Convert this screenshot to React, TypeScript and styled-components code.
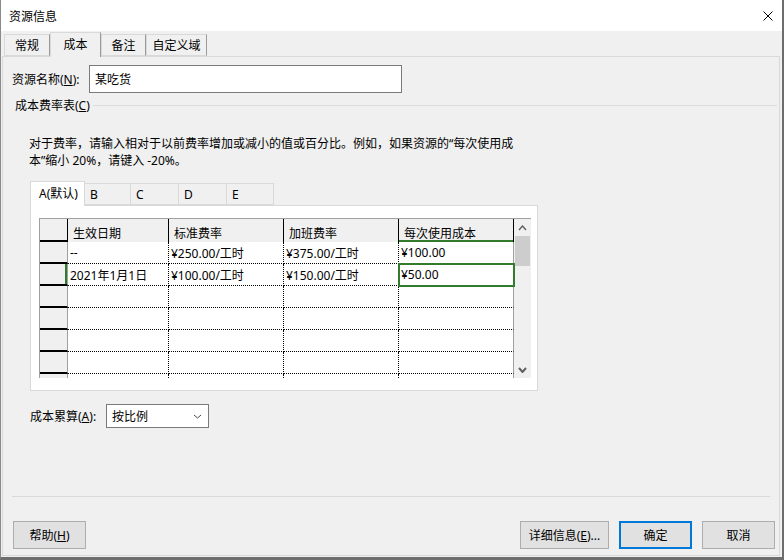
import React from 'react';
import styled, { createGlobalStyle } from 'styled-components';

const GREEN = '#327a2c';

const GlobalStyle = createGlobalStyle`
  html, body {
    margin: 0;
    padding: 0;
    background: #ffffff;
  }
  body {
    font-family: "Noto Sans", "Noto Sans CJK SC", sans-serif;
    font-size: 12px;
    color: #000;
  }
  * {
    box-sizing: border-box;
  }
`;

const Window = styled.div`
  width: 784px;
  height: 560px;
  display: flex;
  flex-direction: column;
  background: #f0f0f0;
  border-left: 1px solid #8a8a8a;
  border-right: 2px solid #6d6d6d;
  border-bottom: 3px solid #6d6d6d;
`;

const TitleBar = styled.div`
  height: 31px;
  flex: none;
  display: flex;
  align-items: center;
  justify-content: space-between;
  padding: 0 9px 0 8px;
  background: #ffffff;
`;

const TabStrip = styled.div`
  height: 25px;
  flex: none;
  display: flex;
  align-items: flex-end;
  padding-left: 3px;
`;

const Tab = styled.div<{ $w: number; $active?: boolean }>`
  width: ${p => p.$w}px;
  height: ${p => (p.$active ? 25 : 22)}px;
  margin-bottom: ${p => (p.$active ? -1 : 0)}px;
  position: relative;
  z-index: ${p => (p.$active ? 2 : 1)};
  display: flex;
  align-items: center;
  justify-content: center;
  padding-bottom: ${p => (p.$active ? 3 : 0)}px;
  background: #f0f0f0;
  border: 1px solid #d9d9d9;
  border-right-color: #9a9a9a;
  border-bottom: ${p => (p.$active ? 'none' : '1px solid #d9d9d9')};
`;

const Panel = styled.div`
  flex: 1;
  margin: 0 2px 1px 1px;
  display: flex;
  flex-direction: column;
  border: 1px solid #d9d9d9;
`;

const NameRow = styled.div`
  margin-top: 8px;
  height: 28px;
  display: flex;
  align-items: center;
  padding-left: 9px;
`;

const Label = styled.span<{ $w: number }>`
  width: ${p => p.$w}px;
  flex: none;
  white-space: nowrap;
`;

const NameInput = styled.input`
  width: 313px;
  height: 28px;
  padding: 0 5px;
  border: 1px solid #7a7a7a;
  background: #ffffff;
  font: inherit;
  color: #000;
  outline: none;
`;

const GroupHeader = styled.div`
  margin-top: 4px;
  height: 16px;
  display: flex;
  align-items: center;
  padding-left: 12px;
`;

const GroupLine = styled.div`
  flex: 1;
  height: 1px;
  margin: 0 2px 0 3px;
  background: #dcdcdc;
`;

const Hint = styled.p`
  margin: 22px 0 0;
  padding-left: 26px;
  line-height: 17px;
`;

const RateTabs = styled.div`
  margin: 12px 0 0 27px;
  height: 24px;
  display: flex;
  align-items: flex-end;
`;

const RateTab = styled.div<{ $w: number; $active?: boolean }>`
  width: ${p => p.$w}px;
  height: ${p => (p.$active ? 25 : 22)}px;
  margin-bottom: ${p => (p.$active ? -1 : 0)}px;
  position: relative;
  z-index: ${p => (p.$active ? 2 : 1)};
  display: flex;
  align-items: center;
  padding: 0 0 ${p => (p.$active ? 2 : 0)}px ${p => (p.$active ? 8 : 5)}px;
  background: ${p => (p.$active ? '#ffffff' : '#f0f0f0')};
  border: 1px solid #d9d9d9;
  border-left-width: ${p => (p.$active ? 1 : 0)}px;
  border-bottom: ${p => (p.$active ? 'none' : '1px solid #d9d9d9')};
`;

const RatePanel = styled.div`
  margin-left: 27px;
  width: 508px;
  height: 186px;
  padding: 12px 0 0 8px;
  background: #ffffff;
  border: 1px solid #d9d9d9;
`;

const GridFrame = styled.div`
  width: 492px;
  height: 160px;
  display: flex;
  overflow: hidden;
  border-top: 1px solid #a0a0a0;
  border-left: 1px solid #a0a0a0;
  background: #ffffff;
`;

const Sheet = styled.div`
  width: 474px;
  flex: none;
  display: flex;
  flex-direction: column;
`;

const Row = styled.div<{ $h: number }>`
  height: ${p => p.$h}px;
  flex: none;
  display: flex;
`;

const RowHead = styled.div<{ $current?: boolean; $corner?: boolean }>`
  width: 28px;
  height: 100%;
  flex: none;
  background: #f0f0f0;
  border-right: 1px solid ${p => (p.$corner ? '#000' : '#a0a0a0')};
  border-bottom: 2px solid #000;
  box-shadow: ${p => (p.$current ? `inset -2px 0 0 ${GREEN}` : 'none')};
`;

const ColHead = styled.div<{ $w: number; $active?: boolean }>`
  width: ${p => p.$w}px;
  height: 100%;
  flex: none;
  display: flex;
  align-items: center;
  padding: 4px 0 0 5px;
  background: #f0f0f0;
  border-right: 1px solid #000;
  box-shadow: ${p => (p.$active ? `inset 0 -2px 0 ${GREEN}` : 'none')};
  white-space: nowrap;
`;

const Cell = styled.div<{ $w: number; $last?: boolean; $active?: boolean }>`
  width: ${p => p.$w}px;
  height: 100%;
  flex: none;
  display: flex;
  align-items: center;
  padding-left: 2px;
  white-space: nowrap;
  border-right: ${p => (p.$last ? '1px solid #a0a0a0' : '1px dotted #000')};
  border-bottom: 1px dotted #000;
  position: relative;
  z-index: ${p => (p.$active ? 1 : 0)};
  outline: ${p => (p.$active ? `2px solid ${GREEN}` : 'none')};
  outline-offset: -1px;
`;

const ScrollBar = styled.div`
  width: 17px;
  flex: none;
  display: flex;
  flex-direction: column;
  background: #f0f0f0;
`;

const ScrollArrow = styled.div`
  height: 17px;
  flex: none;
  display: flex;
  align-items: center;
  justify-content: center;
`;

const Thumb = styled.div`
  height: 30px;
  flex: none;
  margin: 0 1px;
  background: #cdcdcd;
`;

const Track = styled.div`
  flex: 1;
`;

const AccrualRow = styled.div`
  margin-top: 13px;
  height: 24px;
  display: flex;
  align-items: center;
  padding-left: 27px;
`;

const Select = styled.div`
  width: 103px;
  height: 24px;
  display: flex;
  align-items: center;
  justify-content: space-between;
  padding: 0 6px 0 5px;
  background: #ffffff;
  border: 1px solid #7a7a7a;
`;

const Separator = styled.div`
  margin: 68px 9px 0 9px;
  height: 1px;
  background: #d9d9d9;
`;

const ButtonRow = styled.div`
  margin-top: 24px;
  height: 28px;
  display: flex;
  gap: 10px;
  padding: 0 4px 0 10px;
`;

const Spacer = styled.div`
  flex: 1;
`;

const Button = styled.button<{ $w: number; $default?: boolean }>`
  width: ${p => p.$w}px;
  height: 28px;
  padding: 0;
  background: #e1e1e1;
  border: ${p => (p.$default ? '2px solid #0078d7' : '1px solid #adadad')};
  font: inherit;
  color: #000;
`;

const COLUMNS = [
  { key: 'date', title: '生效日期', w: 101 },
  { key: 'std', title: '标准费率', w: 115 },
  { key: 'ot', title: '加班费率', w: 115 },
  { key: 'per', title: '每次使用成本', w: 115 },
] as const;

type Rate = { date: string; std: string; ot: string; per: string };

const RATES: Rate[] = [
  { date: '--', std: '¥250.00/工时', ot: '¥375.00/工时', per: '¥100.00' },
  { date: '2021年1月1日', std: '¥100.00/工时', ot: '¥150.00/工时', per: '¥50.00' },
  { date: '', std: '', ot: '', per: '' },
  { date: '', std: '', ot: '', per: '' },
  { date: '', std: '', ot: '', per: '' },
  { date: '', std: '', ot: '', per: '' },
  { date: '', std: '', ot: '', per: '' },
];

const ACTIVE_ROW = 1;
const ACTIVE_COL = 3;

const CloseIcon = () => (
  <svg width="10" height="10" viewBox="0 0 10 10">
    <path d="M0.5 0.5 L9.5 9.5 M9.5 0.5 L0.5 9.5" stroke="#000" strokeWidth="1" />
  </svg>
);

const Chevron = ({ up, color = '#606060', w = 9, h = 6, sw = 1.6 }: { up?: boolean; color?: string; w?: number; h?: number; sw?: number }) => (
  <svg width={w} height={h} viewBox={`0 0 ${w} ${h}`}>
    <polyline
      points={up ? `1,${h - 1} ${w / 2},1 ${w - 1},${h - 1}` : `1,1 ${w / 2},${h - 1} ${w - 1},1`}
      fill="none"
      stroke={color}
      strokeWidth={sw}
    />
  </svg>
);

export default function App() {
  return (
    <>
      <GlobalStyle />
      <Window>
        <TitleBar>
          <span>资源信息</span>
          <CloseIcon />
        </TitleBar>

        <TabStrip>
          <Tab $w={46}>常规</Tab>
          <Tab $w={51} $active>成本</Tab>
          <Tab $w={45}>备注</Tab>
          <Tab $w={61}>自定义域</Tab>
        </TabStrip>

        <Panel>
          <NameRow>
            <Label $w={77}>资源名称(<u>N</u>):</Label>
            <NameInput value="某吃货" readOnly />
          </NameRow>

          <GroupHeader>
            <span>成本费率表(<u>C</u>)</span>
            <GroupLine />
          </GroupHeader>

          <Hint>
            对于费率，请输入相对于以前费率增加或减小的值或百分比。例如，如果资源的“每次使用成
            <br />
            本”缩小 20%，请键入 -20%。
          </Hint>

          <RateTabs>
            <RateTab $w={55} $active>A(默认)</RateTab>
            <RateTab $w={46}>B</RateTab>
            <RateTab $w={48}>C</RateTab>
            <RateTab $w={48}>D</RateTab>
            <RateTab $w={47}>E</RateTab>
          </RateTabs>

          <RatePanel>
            <GridFrame>
              <Sheet>
                <Row $h={23}>
                  <RowHead $corner />
                  {COLUMNS.map((c, i) => (
                    <ColHead key={c.key} $w={c.w} $active={i === ACTIVE_COL}>
                      {c.title}
                    </ColHead>
                  ))}
                </Row>
                {RATES.map((r, ri) => (
                  <Row key={ri} $h={22}>
                    <RowHead $current={ri === ACTIVE_ROW} />
                    {COLUMNS.map((c, ci) => (
                      <Cell
                        key={c.key}
                        $w={c.w}
                        $last={ci === COLUMNS.length - 1}
                        $active={ri === ACTIVE_ROW && ci === ACTIVE_COL}
                      >
                        {r[c.key]}
                      </Cell>
                    ))}
                  </Row>
                ))}
              </Sheet>
              <ScrollBar>
                <ScrollArrow>
                  <Chevron up w={9} h={6} sw={1.4} />
                </ScrollArrow>
                <Thumb />
                <Track />
                <ScrollArrow>
                  <Chevron w={9} h={6} sw={2} />
                </ScrollArrow>
              </ScrollBar>
            </GridFrame>
          </RatePanel>

          <AccrualRow>
            <Label $w={76}>成本累算(<u>A</u>):</Label>
            <Select>
              <span>按比例</span>
              <Chevron color="#444" w={9} h={5} sw={1} />
            </Select>
          </AccrualRow>

          <Separator />

          <ButtonRow>
            <Button $w={73}>帮助(<u>H</u>)</Button>
            <Spacer />
            <Button $w={89}>详细信息(<u>E</u>)...</Button>
            <Button $w={73} $default>确定</Button>
            <Button $w={73}>取消</Button>
          </ButtonRow>
        </Panel>
      </Window>
    </>
  );
}
